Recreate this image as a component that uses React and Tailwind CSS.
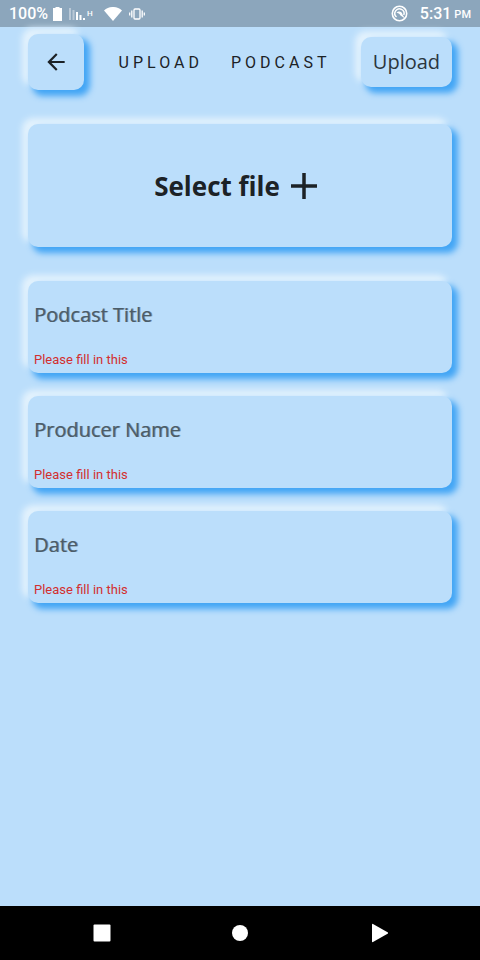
import React from "react";

const raised =
  "rounded-[10px] bg-[#bbdefb] shadow-[5px_5px_6px_1px_#42a5f5,-5px_-5px_6px_1px_#e3f2fd]";

const fields = [
  { id: "title", label: "Podcast Title" },
  { id: "producer", label: "Producer Name" },
  { id: "date", label: "Date" },
];

function StatusBar() {
  return (
    <div className="flex h-[27px] shrink-0 items-center justify-between bg-[#8ca6bc] pr-[9px] pl-[9px] font-['Roboto',sans-serif] text-base font-medium text-white">
      <div className="flex items-center">
        <span>100%</span>
        <svg className="ml-[5px]" width="9" height="14" viewBox="0 0 9 14" fill="currentColor">
          <path d="M2.500 0h4v1H9v13H0V1h2.500z" />
        </svg>
        <svg className="ml-[7px]" width="16" height="12" viewBox="0 0 16 12" fill="currentColor">
          <path d="M0 0h2v12H0zM3.500 2h2v10h-2z" opacity=".4" />
          <path d="M7 4h2v8H7zM10.500 7h2v5h-2zM14 10h2v2h-2z" />
        </svg>
        <span className="ml-[2px] text-[8px]">H</span>
        <svg className="ml-[11px]" width="18" height="14" viewBox="0 0 18 14" fill="currentColor">
          <path d="M0 3.500C5-1.200 13-1.200 18 3.500L9 14z" />
        </svg>
        <svg className="ml-[7px]" width="16" height="12" viewBox="0 0 16 12" fill="none" stroke="currentColor">
          <rect x="5" y="1" width="6" height="10" rx="1" strokeWidth="1.300" />
          <path d="M2.800 2.500v7M13.200 2.500v7M.7 4.500v3M15.300 4.500v3" strokeWidth="1.300" />
        </svg>
      </div>
      <div className="flex items-center">
        <svg className="mr-3" width="17" height="17" viewBox="0 0 17 17" fill="none" stroke="currentColor">
          <circle cx="8.500" cy="8.500" r="7.200" strokeWidth="1.600" />
          <path d="M5.500 12A4.600 4.600 0 1 1 12.800 10" strokeWidth="1.500" />
          <path d="M5.500 8C7.500 5.500 11 6.500 11.500 9.500L14 13.500 9.500 10.500C8.500 8.500 7 8 5.500 8z" fill="currentColor" stroke="none" />
        </svg>
        <span>5:31</span>
        <span className="ml-[3px] pt-1 text-[11px]">PM</span>
      </div>
    </div>
  );
}

function Field({ id, label }) {
  return (
    <div className={`flex h-[92px] flex-col justify-between px-[6px] pt-[18px] pb-[3px] ${raised}`}>
      <div className="grid">
        <label
          htmlFor={id}
          className="col-start-1 row-start-1 font-['Open_Sans',sans-serif] text-xl leading-8 text-[#4b5c68] [text-shadow:1px_0_0_#4b5c6899]"
        >
          {label}
        </label>
        <input
          id={id}
          type="text"
          aria-describedby={`${id}-error`}
          className="col-start-1 row-start-1 w-full bg-transparent text-xl outline-none"
        />
      </div>
      <p id={`${id}-error`} className="font-['Roboto',sans-serif] text-[13px] leading-5 text-[#d32f2f]">
        Please fill in this
      </p>
    </div>
  );
}

function NavBar() {
  return (
    <nav className="flex h-[54px] shrink-0 items-center justify-between bg-black px-[92px] text-white">
      <button aria-label="Recent apps">
        <svg width="20" height="20" viewBox="0 0 20 20" fill="currentColor">
          <rect x="1.500" y="1.500" width="17" height="17" rx="1" />
        </svg>
      </button>
      <button aria-label="Home">
        <svg width="20" height="20" viewBox="0 0 20 20" fill="currentColor">
          <circle cx="10" cy="10" r="8" />
        </svg>
      </button>
      <button aria-label="Back">
        <svg width="20" height="20" viewBox="0 0 20 20" fill="currentColor">
          <path d="M4 1.500Q4 .5 5 1L20 9.500v1L5 19Q4 19.500 4 18.500z" />
        </svg>
      </button>
    </nav>
  );
}

export default function App() {
  return (
    <div className="flex min-h-screen flex-col bg-[#bbdefb] text-[#1c2226]">
      <StatusBar />
      <main className="flex flex-1 flex-col px-7 pt-[7px]">
        <header className="flex items-center justify-between">
          <button aria-label="Go back" className={`flex size-14 items-center justify-center ${raised}`}>
            <svg width="26" height="26" viewBox="0 0 24 24" fill="currentColor">
              <path d="M20 11H7.830l5.590-5.590L12 4l-8 8 8 8 1.410-1.410L7.830 13H20v-2z" />
            </svg>
          </button>
          <h1 className="flex gap-7 pt-[2px] pl-1 font-['Roboto',sans-serif] text-base font-normal tracking-[4px]">
            <span>UPLOAD</span>
            <span>PODCAST</span>
          </h1>
          <button
            className={`h-[50px] w-[91px] font-['Open_Sans',sans-serif] text-xl font-normal text-[#2b363e] ${raised}`}
          >
            Upload
          </button>
        </header>
        <button
          className={`mt-[34px] flex h-[123px] w-full items-center justify-center gap-[10px] pt-px pr-2 font-['Open_Sans',sans-serif] text-[26px] font-bold ${raised}`}
        >
          <span>Select file</span>
          <svg width="28" height="28" viewBox="0 0 28 28" fill="none" stroke="currentColor" strokeWidth="3.500">
            <path d="M14 1v26M1 14h26" />
          </svg>
        </button>
        <form className="mt-[34px] flex flex-col gap-[23px]">
          {fields.map((field) => (
            <Field key={field.id} {...field} />
          ))}
        </form>
      </main>
      <NavBar />
    </div>
  );
}
